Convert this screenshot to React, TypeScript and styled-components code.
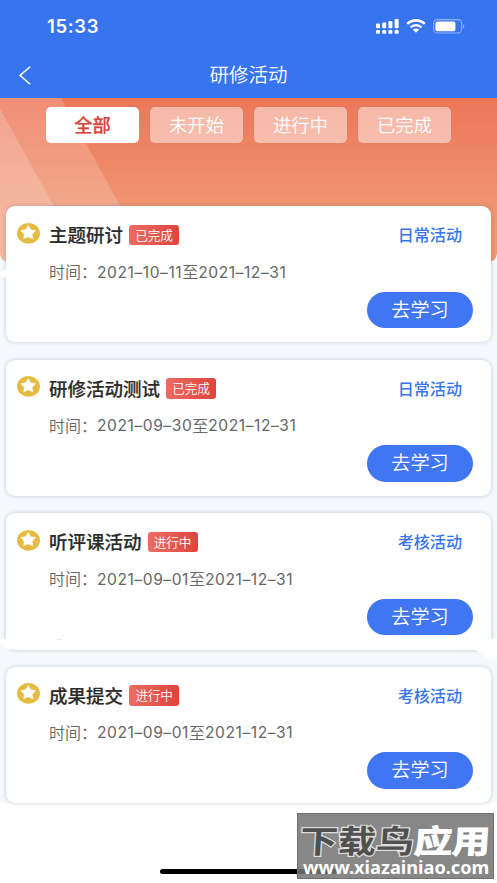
import React from 'react';
import styled, { createGlobalStyle } from 'styled-components';

const tabs = ['全部', '未开始', '进行中', '已完成'];

const activities = [
  {
    title: '主题研讨',
    status: '已完成',
    type: '日常活动',
    start: '2021–10–11',
    end: '2021–12–31',
  },
  {
    title: '研修活动测试',
    status: '已完成',
    type: '日常活动',
    start: '2021–09–30',
    end: '2021–12–31',
  },
  {
    title: '听评课活动',
    status: '进行中',
    type: '考核活动',
    start: '2021–09–01',
    end: '2021–12–31',
  },
  {
    title: '成果提交',
    status: '进行中',
    type: '考核活动',
    start: '2021–09–01',
    end: '2021–12–31',
  },
];

const SignalIcon = () => (
  <svg width="23" height="15" viewBox="0 0 23 15" fill="#fff">
    <rect x="0" y="4.6" width="4" height="4.6" rx="1" />
    <rect x="6.2" y="3.6" width="4" height="5.6" rx="1" />
    <rect x="12.4" y="2" width="4" height="7.2" rx="1" />
    <rect x="18.6" y="0" width="4" height="9.2" rx="1" />
    <rect x="0" y="11" width="4" height="3.8" rx="1" />
    <rect x="6.2" y="11" width="4" height="3.8" rx="1" />
    <rect x="12.4" y="11" width="4" height="3.8" rx="1" />
    <rect x="18.6" y="11" width="4" height="3.8" rx="1" />
  </svg>
);

const WifiIcon = () => (
  <svg width="20" height="14" viewBox="0 0 20 14" fill="none">
    <path d="M1.2 4.9C6.1 0.2 13.9 0.2 18.8 4.9" stroke="#fff" strokeWidth="2.6" />
    <path d="M4.5 8.3C7.6 5.4 12.4 5.4 15.5 8.3" stroke="#fff" strokeWidth="2.4" />
    <path d="M6.9 10.7C8.7 9.2 11.3 9.2 13.1 10.7L10 13.8Z" fill="#fff" />
  </svg>
);

const BatteryIcon = () => (
  <svg width="32" height="15" viewBox="0 0 32 15" fill="none">
    <rect x="0.6" y="0.6" width="28" height="13.4" rx="3.8" stroke="#8bb2f8" strokeWidth="1.1" />
    <rect x="2.4" y="2.4" width="20" height="9.8" rx="2" fill="#fff" />
    <path d="M30 5.2C31.8 5.6 31.8 9 30 9.4Z" fill="#8bb2f8" />
  </svg>
);

const StarIcon = () => (
  <svg width="23" height="21" viewBox="0 0 23 21">
    <ellipse cx="11.5" cy="10.4" rx="11.4" ry="10.3" fill="#e5bb42" />
    <path
      d="M11.2 2.7L13.5 6.8L18.4 7.7L15 11.2L15.6 15.6L11.2 13.7L6.8 15.6L7.4 11.2L4 7.7L8.9 6.8Z"
      fill="#fff"
      stroke="#fff"
      strokeWidth="0.8"
      strokeLinejoin="round"
    />
  </svg>
);

const App = () => {
  return (
    <>
      <GlobalStyle />
      <Screen>
        <Header>
          <StatusBar>
            <Clock>15:33</Clock>
            <StatusIcons>
              <SignalIcon />
              <WifiIcon />
              <BatteryIcon />
            </StatusIcons>
          </StatusBar>
          <NavBar>
            <svg width="12" height="19" viewBox="0 0 12 19" fill="none">
              <path d="M11.2 0.7L1 9.4L11.2 18.2" stroke="#fff" strokeWidth="1.5" />
            </svg>
            <h1>研修活动</h1>
          </NavBar>
        </Header>
        <Content>
          <Banner viewBox="0 0 497 164" preserveAspectRatio="none">
            <defs>
              <linearGradient id="banner" x1="0" y1="0" x2="0" y2="1">
                <stop offset="0" stopColor="#ec7659" />
                <stop offset="0.65" stopColor="#f09470" />
                <stop offset="1" stopColor="#f19672" />
              </linearGradient>
            </defs>
            <path d="M0 0H497V154Q497 164 487 164H10Q0 164 0 154Z" fill="url(#banner)" />
            <path d="M0 0H61L151 164H10Q0 164 0 154Z" fill="#fff" fillOpacity="0.18" />
            <path d="M0 11L85 164H10Q0 164 0 154Z" fill="#fff" fillOpacity="0.18" />
          </Banner>
          <Tabs>
            {tabs.map((tab, i) => (
              <Tab key={tab} $active={i === 0}>
                {tab}
              </Tab>
            ))}
          </Tabs>
          <List>
            {activities.map((item) => (
              <Card key={item.title}>
                <CardHead>
                  <StarIcon />
                  <h2>{item.title}</h2>
                  <Badge>{item.status}</Badge>
                  <Type>{item.type}</Type>
                </CardHead>
                <Time>
                  <span>时间：</span>
                  <b>{item.start}</b>
                  <span>至</span>
                  <b>{item.end}</b>
                </Time>
                <StudyButton>去学习</StudyButton>
              </Card>
            ))}
          </List>
          <Wave viewBox="0 0 497 705">
            <path d="M0 174L6 172V179L0 180Z" />
            <path d="M0 541H497V561H490C484 560 480 554 474 551H6C3 549 2 547 0 547Z" />
            <path d="M56 541.5Q58 540 60 541L62 541.8Z" fill="#f6dccb" />
          </Wave>
        </Content>
        <HomeBar />
        <Watermark>
          <Brand>
            <span>下载鸟</span>应用
          </Brand>
          <Site>www.xiazainiao.com</Site>
        </Watermark>
      </Screen>
    </>
  );
};

export default App;

const GlobalStyle = createGlobalStyle`
  * {
    box-sizing: border-box;
    margin: 0;
    padding: 0;
  }
  body {
    background: #ffffff;
    font-family: 'Noto Sans CJK SC', sans-serif;
    overflow: hidden;
  }
  svg {
    display: block;
    flex-shrink: 0;
  }
`;

const Screen = styled.div`
  position: relative;
  width: 497px;
  height: 883px;
  overflow: hidden;
  background: #ffffff;
`;

const Header = styled.header`
  height: 98px;
  background: #3774f0;
  color: #ffffff;
`;

const StatusBar = styled.div`
  display: flex;
  justify-content: space-between;
  align-items: center;
  height: 52px;
  padding: 0 34px 0 47px;
`;

const Clock = styled.div`
  font-family: Inter, sans-serif;
  font-size: 18.5px;
  font-weight: 600;
  letter-spacing: 0.65px;
`;

const StatusIcons = styled.div`
  display: flex;
  align-items: center;
  gap: 7px;
  margin-right: -2px;
`;

const NavBar = styled.div`
  display: flex;
  align-items: center;
  height: 46px;
  padding: 0 19px;
  h1 {
    flex: 1;
    padding-right: 12px;
    text-align: center;
    font-size: 19.5px;
    font-weight: 350;
    line-height: 42px;
    height: 44px;
  }
`;

const Content = styled.main`
  position: relative;
  height: 705px;
  background: #f5f9fd;
`;

const Banner = styled.svg`
  position: absolute;
  top: 0;
  left: 0;
  width: 497px;
  height: 164px;
`;

const Wave = styled.svg`
  position: absolute;
  top: 0;
  left: 0;
  width: 497px;
  height: 705px;
  fill: #ffffff;
  pointer-events: none;
`;

const Tabs = styled.nav`
  position: relative;
  display: grid;
  grid-template-columns: repeat(4, 93px);
  column-gap: 11px;
  padding: 9px 46px 0;
`;

const Tab = styled.button<{ $active: boolean }>`
  height: 36px;
  padding-bottom: 2px;
  border: none;
  border-radius: 5px;
  background: ${({ $active }) => ($active ? '#ffffff' : 'rgba(255, 255, 255, 0.48)')};
  color: ${({ $active }) => ($active ? '#db443c' : '#ffffff')};
  font-family: inherit;
  font-size: 18.3px;
  font-weight: ${({ $active }) => ($active ? 500 : 350)};
  line-height: 34px;
  -webkit-text-stroke: ${({ $active }) => ($active ? '0.25px #db443c' : '0')};
`;

const List = styled.section`
  position: relative;
  display: flex;
  flex-direction: column;
  gap: 17.2px;
  padding: 63px 6px 0;
`;

const Card = styled.article`
  display: flex;
  flex-direction: column;
  height: 136.4px;
  padding: 17px 18px 0 11px;
  border-radius: 9px;
  background: #ffffff;
  box-shadow: 0 0 4px rgba(70, 80, 100, 0.28);
`;

const CardHead = styled.div`
  display: flex;
  align-items: center;
  height: 24px;
  svg {
    margin-top: -4px;
  }
  h2 {
    height: 24px;
    margin-left: 9px;
    color: #2b2b2b;
    font-size: 18.5px;
    font-weight: 500;
    line-height: 22px;
    -webkit-text-stroke: 0.2px #2b2b2b;
  }
`;

const Badge = styled.span`
  width: 50px;
  height: 20.5px;
  margin-left: 6px;
  border-radius: 3px;
  background: linear-gradient(90deg, #ee6b62, #dd453d);
  color: #ffffff;
  font-size: 12.6px;
  font-weight: 350;
  line-height: 20px;
  text-align: center;
`;

const Type = styled.span`
  height: 24px;
  margin-left: auto;
  padding-right: 11px;
  color: #3774ef;
  font-size: 16.1px;
  font-weight: 500;
  line-height: 22px;
`;

const Time = styled.p`
  display: flex;
  align-items: center;
  height: 24px;
  margin: 13px 0 0 32px;
  color: #666666;
  font-size: 16px;
  font-weight: 350;
  line-height: 24px;
  b {
    padding-top: 1px;
    font-family: Inter, sans-serif;
    font-size: 15.6px;
    font-weight: 400;
    letter-spacing: 0.55px;
  }
  span {
    height: 26px;
  }
`;

const StudyButton = styled.button`
  align-self: flex-end;
  width: 106px;
  height: 36.5px;
  margin-top: 7.5px;
  padding-bottom: 1px;
  border: none;
  border-radius: 19px;
  background: #4076f2;
  color: #ffffff;
  font-family: inherit;
  font-size: 19.2px;
  font-weight: 350;
  line-height: 35px;
`;

const HomeBar = styled.div`
  position: absolute;
  left: 160px;
  top: 869px;
  width: 177px;
  height: 5px;
  border-radius: 3px;
  background: #000000;
`;

const Watermark = styled.div`
  position: absolute;
  left: 297px;
  top: 813px;
  width: 197px;
  height: 66px;
  border: 1px solid #707070;
  background: rgba(115, 115, 115, 0.86);
  color: #ffffff;
  white-space: nowrap;
`;

const Brand = styled.div`
  height: 42px;
  padding-left: 2px;
  font-size: 32px;
  font-weight: 700;
  line-height: 50px;
  transform: scaleX(1.19) skewX(-3deg);
  transform-origin: 0 50%;
  -webkit-text-stroke: 1px #ffffff;
  span {
    color: #505050;
    -webkit-text-stroke: 2.4px #dddddd;
    paint-order: stroke fill;
  }
`;

const Site = styled.div`
  height: 22px;
  padding-left: 5px;
  font-family: 'Noto Sans', sans-serif;
  font-size: 18.2px;
  font-weight: 700;
  line-height: 22px;
`;
